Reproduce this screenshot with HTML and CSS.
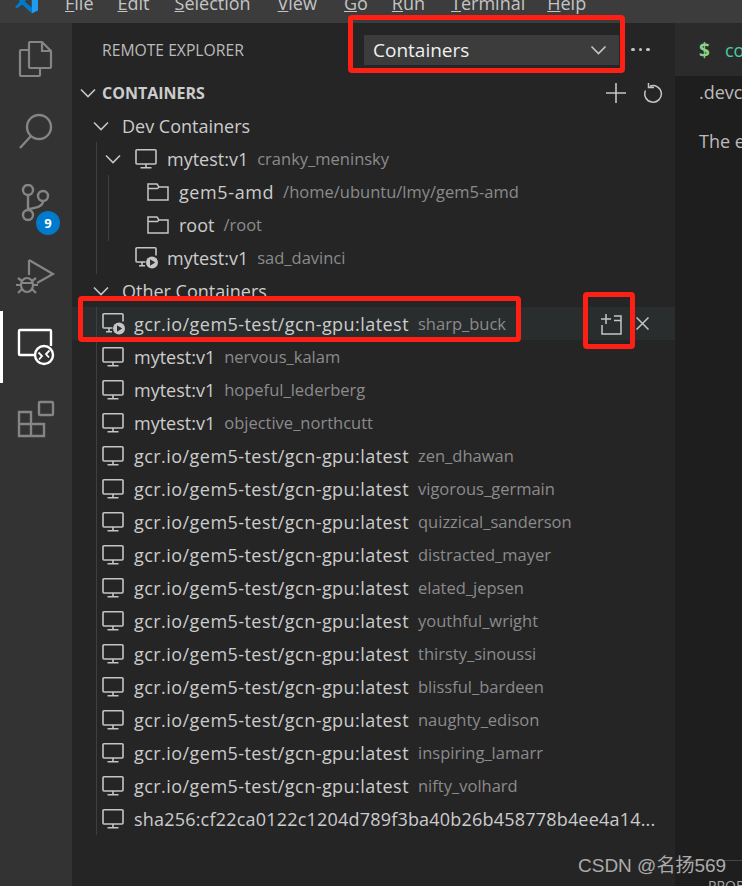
FILE: index.html
```html
<!DOCTYPE html>
<html lang="en">
<head>
<meta charset="utf-8">
<title>Remote Explorer</title>
<link rel="stylesheet" href="styles.css">
</head>
<body>
<svg class="defs" width="0" height="0" aria-hidden="true">
  <symbol id="chev" viewBox="0 0 16 10"><path d="M1 1.500 8 8.500 15 1.500" fill="none" stroke="currentColor" stroke-width="1.600"/></symbol>
  <symbol id="mon" viewBox="0 0 22 20"><path d="M2 .8H20a1 1 0 0 1 1 1V14a1 1 0 0 1-1 1H2a1 1 0 0 1-1-1V1.800a1 1 0 0 1 1-1ZM11 15V18.800M5.500 18.800H16.500" fill="none" stroke="currentColor" stroke-width="1.600"/></symbol>
  <symbol id="run" viewBox="0 0 24 22"><path d="M10.500 15H2a1 1 0 0 1-1-1V1.800a1 1 0 0 1 1-1H20a1 1 0 0 1 1 1V8.500M7 15V18.500M4 18.800H10" fill="none" stroke="currentColor" stroke-width="1.600"/><circle cx="17" cy="15.500" r="6" fill="currentColor"/><path d="M15 12.300 20.200 15.500 15 18.700Z" fill="#303031"/></symbol>
  <symbol id="folder" viewBox="0 0 22 18"><path d="M1 1H10L12 4H21V17H1ZM1 5.500H10.500L12 4" fill="none" stroke="currentColor" stroke-width="1.500"/></symbol>
</svg>

<header class="titlebar">
  <svg class="logo" viewBox="0 0 100 100"><path d="M71 2 96 14V86L71 98Z" fill="#1f9cf0"/><path d="M71 2 33 38 13 23 4 28 24 50 4 72 13 77 33 62 71 98V74L42 50 71 26Z" fill="#007acc"/></svg>
  <nav class="menu">
    <span class="m-file"><u>F</u>ile</span>
    <span class="m-edit"><u>E</u>dit</span>
    <span class="m-sel"><u>S</u>election</span>
    <span class="m-view"><u>V</u>iew</span>
    <span class="m-go"><u>G</u>o</span>
    <span class="m-run"><u>R</u>un</span>
    <span class="m-term"><u>T</u>erminal</span>
    <span class="m-help"><u>H</u>elp</span>
  </nav>
</header>

<div class="workbench">
  <aside class="activity">
    <div class="act">
      <svg viewBox="0 0 36 38" width="36" height="38"><path d="M10 10H3a1 1 0 0 0-1 1V35a1 1 0 0 0 1 1H21a1 1 0 0 0 1-1V29M11 2H24L33 11V27a1 1 0 0 1-1 1H12a1 1 0 0 1-1-1V3a1 1 0 0 1 1-1ZM24 2V11H33" fill="none" stroke="#858585" stroke-width="2.200"/></svg>
    </div>
    <div class="act">
      <svg viewBox="0 0 36 38" width="36" height="38"><circle cx="21" cy="15" r="12" fill="none" stroke="#858585" stroke-width="2.400"/><path d="M13 24 2 36" stroke="#858585" stroke-width="2.400"/></svg>
    </div>
    <div class="act">
      <svg viewBox="0 0 36 38" width="36" height="38"><g fill="none" stroke="#858585" stroke-width="2.400"><circle cx="10" cy="6" r="5"/><circle cx="10" cy="31" r="5"/><circle cx="25" cy="12" r="5"/><path d="M10 11V26M25 17C25 22 20 24 10 25"/></g></svg>
      <span class="badge">9</span>
    </div>
    <div class="act">
      <svg viewBox="0 0 40 40" width="40" height="40"><g fill="none" stroke="#858585" stroke-width="2.200"><path d="M13 5V20M13 5 37 19 21 28"/><ellipse cx="11" cy="30" rx="6" ry="7"/><path d="M2 23 6 26M20 23 16 26M0 30H5M17 30H22M2 38 6 34M20 38 16 34M5 28H17"/></g></svg>
    </div>
    <div class="act active">
      <svg viewBox="0 0 38 38" width="38" height="38"><path d="M19 27H3a1 1 0 0 1-1-1V3a1 1 0 0 1 1-1H33a1 1 0 0 1 1 1V18" fill="none" stroke="#fff" stroke-width="2.400"/><circle cx="27" cy="27" r="9" fill="none" stroke="#fff" stroke-width="2.400"/><path d="M21.500 24.500 25 28 22 31.500M32.500 22.500 29 26 32 29.500" fill="none" stroke="#fff" stroke-width="1.800"/></svg>
    </div>
    <div class="act">
      <svg viewBox="0 0 38 38" width="38" height="38"><g fill="none" stroke="#858585" stroke-width="2.400"><path d="M2 12H14V36H2ZM2 24H27V36H14"/><rect x="22" y="2" width="14" height="13" rx="1"/></g></svg>
    </div>
  </aside>

  <section class="sidebar">
    <div class="side-head">
      <span class="side-title">REMOTE EXPLORER</span>
      <div class="select"><span>Containers</span><svg class="sel-chev"><use href="#chev"/></svg></div>
      <span class="more"><i></i><i></i><i></i></span>
    </div>
    <div class="section-head">
      <svg class="chev chev-top"><use href="#chev"/></svg>
      <span class="section-title">CONTAINERS</span>
      <svg class="plus" viewBox="0 0 20 20"><path d="M10 0V20M0 10H20" stroke="#c5c5c5" stroke-width="1.600"/></svg>
      <svg class="refresh" viewBox="0 0 20 20"><path d="M7 3.200A8.300 8.300 0 1 1 2.500 7.500M5.500 0V4.600H11" fill="none" stroke="#c5c5c5" stroke-width="1.500"/></svg>
    </div>

    <div class="row p-21"><svg class="chev"><use href="#chev"/></svg><span class="name">Dev Containers</span></div>
    <div class="group g-1">
      <div class="row p-33"><svg class="chev chev-item"><use href="#chev"/></svg><svg class="ic-mon"><use href="#mon"/></svg><span class="name">mytest:v1</span><span class="desc">cranky_meninsky</span></div>
      <div class="group g-2">
        <div class="row p-75"><svg class="ic-folder"><use href="#folder"/></svg><span class="name wider">gem5-amd</span><span class="desc">/home/ubuntu/lmy/gem5-amd</span></div>
        <div class="row p-75"><svg class="ic-folder"><use href="#folder"/></svg><span class="name">root</span><span class="desc">/root</span></div>
      </div>
      <div class="row p-63"><svg class="ic-run"><use href="#run"/></svg><span class="name">mytest:v1</span><span class="desc">sad_davinci</span></div>
    </div>
    <div class="row p-21"><svg class="chev"><use href="#chev"/></svg><span class="name">Other Containers</span></div>
    <div class="group g-1">
      <div class="row p-30 hover"><svg class="ic-run"><use href="#run"/></svg><span class="name wide">gcr.io/gem5-test/gcn-gpu:latest</span><span class="desc">sharp_buck</span>
        <span class="actions">
          <svg class="ic-attach" viewBox="0 0 24 24"><path d="M2 7H12M7 2V12M15 4H22V22H3V13" fill="none" stroke="#c5c5c5" stroke-width="1.500"/><path d="M15 8.500H22" stroke="#c5c5c5" stroke-width="1.500"/></svg>
          <svg class="ic-close" viewBox="0 0 13 13"><path d="M.5.5 12.500 12.500M12.500.5.500 12.500" stroke="#c5c5c5" stroke-width="1.500"/></svg>
        </span>
      </div>
      <div class="row p-30"><svg class="ic-mon"><use href="#mon"/></svg><span class="name">mytest:v1</span><span class="desc">nervous_kalam</span></div>
      <div class="row p-30"><svg class="ic-mon"><use href="#mon"/></svg><span class="name">mytest:v1</span><span class="desc">hopeful_lederberg</span></div>
      <div class="row p-30"><svg class="ic-mon"><use href="#mon"/></svg><span class="name">mytest:v1</span><span class="desc">objective_northcutt</span></div>
      <div class="row p-30"><svg class="ic-mon"><use href="#mon"/></svg><span class="name wide">gcr.io/gem5-test/gcn-gpu:latest</span><span class="desc">zen_dhawan</span></div>
      <div class="row p-30"><svg class="ic-mon"><use href="#mon"/></svg><span class="name wide">gcr.io/gem5-test/gcn-gpu:latest</span><span class="desc">vigorous_germain</span></div>
      <div class="row p-30"><svg class="ic-mon"><use href="#mon"/></svg><span class="name wide">gcr.io/gem5-test/gcn-gpu:latest</span><span class="desc">quizzical_sanderson</span></div>
      <div class="row p-30"><svg class="ic-mon"><use href="#mon"/></svg><span class="name wide">gcr.io/gem5-test/gcn-gpu:latest</span><span class="desc">distracted_mayer</span></div>
      <div class="row p-30"><svg class="ic-mon"><use href="#mon"/></svg><span class="name wide">gcr.io/gem5-test/gcn-gpu:latest</span><span class="desc">elated_jepsen</span></div>
      <div class="row p-30"><svg class="ic-mon"><use href="#mon"/></svg><span class="name wide">gcr.io/gem5-test/gcn-gpu:latest</span><span class="desc">youthful_wright</span></div>
      <div class="row p-30"><svg class="ic-mon"><use href="#mon"/></svg><span class="name wide">gcr.io/gem5-test/gcn-gpu:latest</span><span class="desc">thirsty_sinoussi</span></div>
      <div class="row p-30"><svg class="ic-mon"><use href="#mon"/></svg><span class="name wide">gcr.io/gem5-test/gcn-gpu:latest</span><span class="desc">blissful_bardeen</span></div>
      <div class="row p-30"><svg class="ic-mon"><use href="#mon"/></svg><span class="name wide">gcr.io/gem5-test/gcn-gpu:latest</span><span class="desc">naughty_edison</span></div>
      <div class="row p-30"><svg class="ic-mon"><use href="#mon"/></svg><span class="name wide">gcr.io/gem5-test/gcn-gpu:latest</span><span class="desc">inspiring_lamarr</span></div>
      <div class="row p-30"><svg class="ic-mon"><use href="#mon"/></svg><span class="name wide">gcr.io/gem5-test/gcn-gpu:latest</span><span class="desc">nifty_volhard</span></div>
      <div class="row p-30"><svg class="ic-mon"><use href="#mon"/></svg><span class="name hash">sha256:cf22ca0122c1204d789f3ba40b26b458778b4ee4a14...</span></div>
    </div>
  </section>

  <main class="editor">
    <div class="tabs"><span class="dollar">$</span><span class="tab-name">co</span></div>
    <div class="doc">
      <p class="doc-a">.devc</p>
      <p class="doc-b">The e</p>
    </div>
    <div class="panel-line"></div>
    <div class="panel-tab">PROB</div>
  </main>
</div>

<div class="mark mark-select"></div>
<div class="mark mark-row"></div>
<div class="mark mark-action"></div>
<div class="watermark">CSDN @名扬569</div>
</body>
</html>
```
FILE: styles.css
```css
* { box-sizing: border-box; }
html, body { margin: 0; height: 100%; }
body {
  width: 742px;
  height: 886px;
  position: relative;
  overflow: hidden;
  background: #1e1e1e;
  color: #cccccc;
  font-family: "Open Sans", "Noto Sans CJK SC", sans-serif;
  font-size: 18px;
}
.defs { position: absolute; }

.titlebar {
  height: 23px;
  background: #3c3c3c;
  overflow: hidden;
  display: flex;
  align-items: flex-end;
  color: #c4c4c4;
}
.logo { width: 25px; height: 25px; margin-left: 14px; margin-bottom: 9px; flex: none; }
.menu { display: flex; margin-left: 26px; line-height: 24px; margin-bottom: 8px; }
.m-edit { margin-left: 24px; }
.m-sel { margin-left: 25px; }
.m-view { margin-left: 27px; }
.m-go { margin-left: 27px; }
.m-run { margin-left: 24px; }
.m-term { margin-left: 26px; }
.m-help { margin-left: 22px; }

.workbench { display: flex; height: 863px; }

.activity { width: 72px; flex: none; background: #333333; }
.act {
  height: 72px;
  display: flex;
  align-items: center;
  justify-content: center;
  position: relative;
}
.act.active { border-left: 3px solid #ffffff; padding-right: 3px; }
.badge {
  position: absolute;
  left: 36px;
  top: 44px;
  width: 24px;
  height: 24px;
  border-radius: 50%;
  background: #007acc;
  color: #fff;
  font-size: 13px;
  font-weight: 700;
  line-height: 24px;
  text-align: center;
}

.sidebar { width: 603px; flex: none; background: #252526; }
.side-head { height: 53px; display: flex; align-items: center; padding-left: 30px; }
.side-title { font-size: 15.700px; color: #bbbbbb; width: 262px; flex: none; }
.select {
  width: 255px;
  height: 30px;
  margin-top: 1px;
  background: #3c3c3c;
  color: #f0f0f0;
  display: flex;
  align-items: center;
  justify-content: space-between;
  padding: 0 12px 0 9px;
  font-size: 19px;
  flex: none;
}
.sel-chev { width: 17px; height: 10px; color: #c5c5c5; }
.more { display: flex; gap: 4px; margin-left: 12px; }
.more i { width: 3.500px; height: 3.500px; border-radius: 50%; background: #c5c5c5; }

.section-head { height: 33px; display: flex; align-items: center; padding-left: 8px; }
.chev { width: 16px; height: 10px; flex: none; color: #c5c5c5; margin-right: 13px; }
.chev-top { margin-right: 6px; }
.chev-item { margin-right: 14px; }
.section-title { font-size: 16px; font-weight: 700; color: #cccccc; width: 504px; flex: none; }
.plus { width: 20px; height: 20px; flex: none; }
.refresh { width: 20px; height: 20px; flex: none; margin-left: 17px; }

.row { height: 33px; display: flex; align-items: center; white-space: nowrap; position: relative; }
.p-21 { padding-left: 21px; }
.p-33 { padding-left: 33px; }
.p-30 { padding-left: 30px; }
.p-63 { padding-left: 63px; }
.p-75 { padding-left: 75px; }
.hover { background: #2a2d2e; }

.name { color: #cccccc; }
.wide { letter-spacing: .45px; }
.wider { letter-spacing: .6px; }
.hash { letter-spacing: .2px; }
.desc { color: #8b8b8b; font-size: 16.500px; margin-left: 9px; }
.ic-mon { width: 22px; height: 20px; color: #c5c5c5; margin-right: 10px; flex: none; }
.ic-run { width: 24px; height: 22px; color: #c5c5c5; margin-right: 8px; flex: none; }
.ic-folder { width: 22px; height: 18px; color: #c5c5c5; margin-right: 10px; flex: none; }

.group { position: relative; }
.group::before {
  content: "";
  position: absolute;
  top: 0;
  bottom: 0;
  width: 1px;
  background: #3f3f40;
  z-index: 1;
}
.g-1::before { left: 24px; }
.g-2::before { left: 36px; }

.actions { margin-left: auto; display: flex; align-items: center; padding-right: 26px; }
.ic-attach { width: 24px; height: 24px; }
.ic-close { width: 13px; height: 13px; margin-left: 13px; }

.editor { flex: 1; min-width: 0; position: relative; background: #1e1e1e; white-space: nowrap; overflow: hidden; }
.tabs { height: 53px; background: #2b2b2c; display: flex; align-items: center; padding-left: 24px; }
.dollar { color: #89d185; font-weight: 700; font-size: 19px; margin-right: 15px; }
.tab-name { color: #4ec9a0; }
.doc { padding-left: 24px; color: #bbbbbb; }
.doc p { margin: 0; line-height: 33px; }
.doc .doc-b { margin-top: 16px; }
.panel-line { position: absolute; left: 0; right: 0; top: 837px; height: 1px; background: #454545; }
.panel-tab { position: absolute; left: 33px; top: 853px; font-size: 14px; color: #aaaaaa; }

.mark { position: absolute; border: 5px solid #ff2015; border-radius: 4px; z-index: 5; }
.mark-select { left: 348px; top: 15px; width: 277px; height: 58px; }
.mark-row { left: 78px; top: 296px; width: 443px; height: 46px; }
.mark-action { left: 583px; top: 292px; width: 52px; height: 57px; }
.watermark {
  position: absolute;
  left: 578px;
  top: 854px;
  z-index: 6;
  font-family: "Liberation Sans", "Noto Sans CJK SC", sans-serif;
  font-size: 19px;
  line-height: 24px;
  color: #ababab;
}
```
